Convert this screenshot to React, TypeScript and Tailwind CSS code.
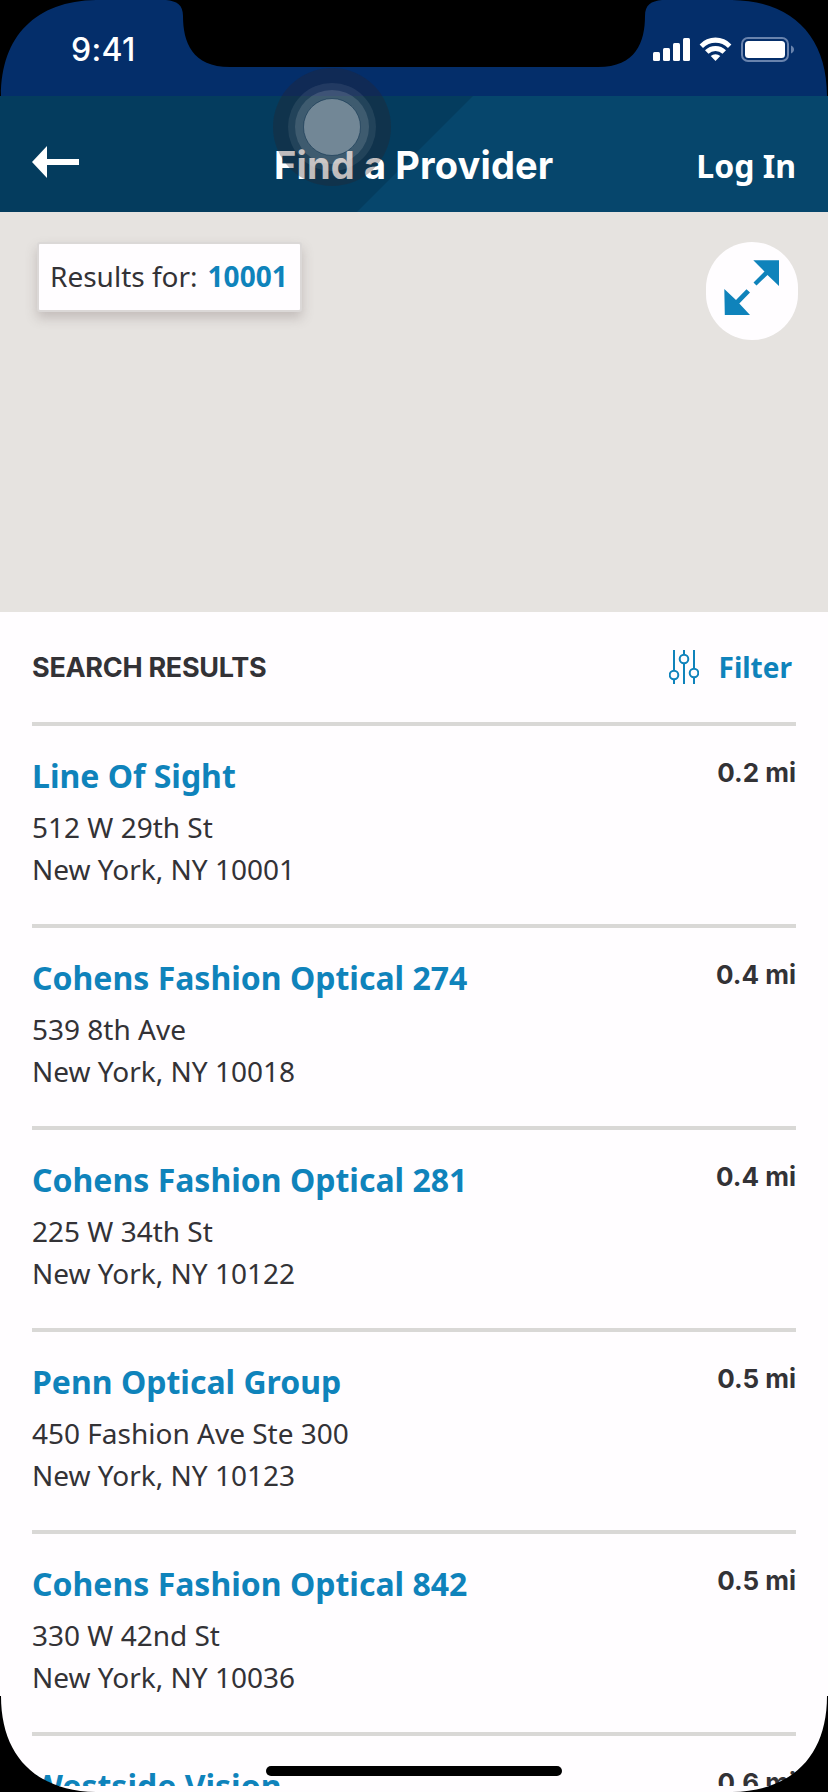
const NOTO = "font-['Noto_Sans','Noto_Sans_CJK_SC',sans-serif]";

const providers = [
  { name: "Line Of Sight", street: "512 W 29th St", city: "New York, NY 10001", distance: "0.2 mi" },
  { name: "Cohens Fashion Optical 274", street: "539 8th Ave", city: "New York, NY 10018", distance: "0.4 mi" },
  { name: "Cohens Fashion Optical 281", street: "225 W 34th St", city: "New York, NY 10122", distance: "0.4 mi" },
  { name: "Penn Optical Group", street: "450 Fashion Ave Ste 300", city: "New York, NY 10123", distance: "0.5 mi" },
  { name: "Cohens Fashion Optical 842", street: "330 W 42nd St", city: "New York, NY 10036", distance: "0.5 mi" },
  { name: "Westside Vision", street: "", city: "", distance: "0.6 mi" },
];

function StatusBar() {
  return (
    <div className="flex h-24 shrink-0 items-start justify-between bg-[#042e6a] pr-[34px] pl-[71px] text-white">
      <div className="mt-[30px] font-['Inter',sans-serif] text-[32px] leading-10 font-medium tracking-[0.3px]">9:41</div>
      <svg className="mt-[36px]" width="142" height="28" viewBox="652 36 142 28" fill="#fff">
        <rect x="653" y="52" width="7" height="9" rx="1.5" />
        <rect x="663" y="48" width="7" height="13" rx="1.5" />
        <rect x="673" y="43" width="7" height="18" rx="1.5" />
        <rect x="683" y="38" width="7" height="23" rx="1.5" />
        <path d="M699.6 44.4a22 22 0 0 1 31.8 0l-3.4 3.6a17.4 17.4 0 0 0-25 0z" />
        <path d="M705 50.2a15 15 0 0 1 21 0l-3.5 3.5a10.2 10.2 0 0 0-14 0z" />
        <path d="M710.7 56a7.2 7.2 0 0 1 9.6 0l-4.8 5z" />
        <rect x="742" y="38" width="46" height="23" rx="6" fill="none" stroke="#6983ad" strokeWidth="2" />
        <rect x="745" y="41" width="40" height="17" rx="3.5" />
        <path d="M791 45.5c4 1.500 4 6.500 0 8z" fill="#6983ad" />
      </svg>
    </div>
  );
}

function Header() {
  return (
    <header className="relative flex h-[116px] shrink-0 items-start justify-between bg-[#043c5e] pr-8 pl-8 text-white">
      <svg className="absolute inset-0" width="828" height="116" viewBox="0 0 828 116">
        <path d="M473 0H828V116H357z" fill="#06466c" />
      </svg>
      <svg className="relative mt-[50px]" width="48" height="32" viewBox="0 0 48 32" fill="#fff">
        <path d="M0 16L15 0V13H47V19H15V32z" />
      </svg>
      <h1 className="absolute top-[45px] left-[274px] font-['Inter',sans-serif] text-[38px] leading-[48px] font-bold tracking-[0.15px] whitespace-nowrap">
        Find a Provider
      </h1>
      <div className={`relative mt-[48px] text-[32px] leading-[44px] font-bold ${NOTO}`}>Log In</div>
    </header>
  );
}

function MapArea() {
  return (
    <section className={`flex h-[400px] shrink-0 items-start justify-between bg-[#e6e3e0] pr-[30px] pl-[37px] ${NOTO}`}>
      <div className="mt-[30px] flex h-[70px] w-[265px] items-center gap-[10px] rounded-[3px] border-2 border-[#dbd8d7] bg-[#fffdff] pb-0.5 pl-[11px] text-[28px] leading-10 whitespace-nowrap text-[#333236] shadow-[0_6px_12px_rgba(90,75,75,0.25)]">
        <span>Results for:</span>
        <span className="font-bold text-[#0f83bb]">10001</span>
      </div>
      <div className="mt-[30px] h-[98px] w-[92px] rounded-[46px] bg-[#fffdff]">
        <svg width="92" height="98" viewBox="706 242 92 98" fill="#0f83bb">
          <path d="M753.300 260.300H779V286L767.500 275L756.500 285.500L753.500 282.500L764.500 271.500z" />
          <path d="M724.300 289L736 300L746.500 289.300L750 292.500L739.300 303.500L750 315H724.800z" />
        </svg>
      </div>
    </section>
  );
}

function FilterIcon() {
  return (
    <svg width="30" height="34" viewBox="668 650 30 34" fill="none" stroke="#0f83bb" strokeWidth="2">
      <path d="M673 650V670M673 680V684M683 650V654M683 664V684M693 650V668M693 678V684" />
      <circle cx="673" cy="675" r="4.300" />
      <circle cx="683" cy="659" r="4.300" />
      <circle cx="693" cy="673" r="4.300" />
    </svg>
  );
}

function Touch() {
  return (
    <svg className="absolute top-[68px] left-[273px]" width="118" height="118" viewBox="-59 -59 118 118">
      <circle r="59" fill="rgb(48,33,38)" fillOpacity="0.3" />
      <circle r="44" fill="#fff" fillOpacity="0.08" />
      <circle r="37" fill="#fff" fillOpacity="0.13" />
      <circle r="28.500" fill="#fff" fillOpacity="0.27" stroke="#123552" strokeOpacity="0.6" />
    </svg>
  );
}

function Bezel() {
  return (
    <svg className="pointer-events-none absolute inset-0" width="828" height="1792" viewBox="0 0 828 1792">
      <path d="M0 0H96C36 1 1 36 1 96H0z" />
      <path d="M828 0H732C792 1 827 36 827 96H828z" />
      <path d="M166 0C177 1 183 5 183 16C183 42 192 67 230 67H598C636 67 645 42 645 16C645 5 651 1 662 0z" />
      <path d="M0 1792H96C36 1791 1 1756 1 1696H0z" />
      <path d="M828 1792H732C792 1791 827 1756 827 1696H828z" />
      <rect x="266" y="1766" width="296" height="10" rx="5" />
    </svg>
  );
}

export default function App() {
  return (
    <div className="relative flex h-[1792px] w-[828px] flex-col overflow-hidden bg-[#fffdff] pb-1.5">
      <StatusBar />
      <Header />
      <MapArea />
      <main className={`flex min-h-0 flex-1 flex-col overflow-hidden px-8 text-[#333236] ${NOTO}`}>
        <div className="flex h-[110px] shrink-0 items-center justify-between pr-1">
          <h2 className="pt-0.5 font-['Inter',sans-serif] text-[27px] leading-10 font-bold tracking-[-0.3px]">SEARCH RESULTS</h2>
          <div className="flex items-center gap-5">
            <FilterIcon />
            <span className="text-[28px] leading-10 font-bold text-[#0f83bb]">Filter</span>
          </div>
        </div>
        {providers.map((p) => (
          <article key={p.name} className="flex h-[202px] shrink-0 items-start justify-between border-t-4 border-[#d9d8d6] pt-7">
            <div>
              <h3 className="text-[32px] leading-[44px] font-bold text-[#0f83bb]">{p.name}</h3>
              <p className="mt-2 text-[28px] leading-[42px]">
                {p.street}
                <br />
                {p.city}
              </p>
            </div>
            <div className="mt-[3px] font-['Inter',sans-serif] text-[26px] leading-8 font-bold">{p.distance}</div>
          </article>
        ))}
      </main>
      <Touch />
      <Bezel />
    </div>
  );
}
